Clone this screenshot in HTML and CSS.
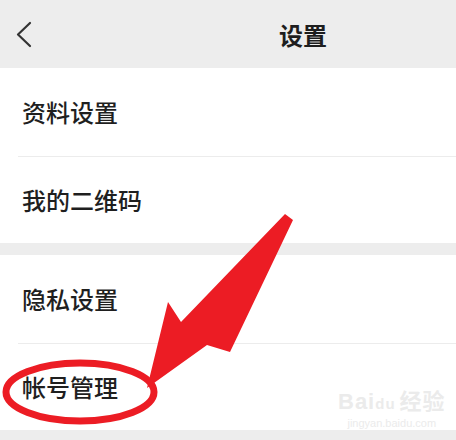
FILE: index.html
```html
<!DOCTYPE html>
<html>
<head>
    <meta charset="utf-8">
    <title>设置</title>
    <link rel="stylesheet" href="styles.css">
</head>
<body>
    <div class="screen">
        <div class="header">
            <span class="back">
                <svg width="20" height="30" viewBox="0 0 20 30">
                    <polyline points="14,4 2,15.5 14,27" fill="none" stroke="#333" stroke-width="2.2" stroke-linecap="round" stroke-linejoin="round"/>
                </svg>
            </span>
            <span class="title">设置</span>
        </div>

        <div class="group">
            <div class="item">资料设置</div>
            <div class="item">我的二维码</div>
        </div>

        <div class="group">
            <div class="item">隐私设置</div>
            <div class="item">帐号管理</div>
        </div>

        <div class="watermark">
            <div class="wm-logo">Bai<span class="paw">du</span>经验</div>
            <div class="wm-url">jingyan.baidu.com</div>
        </div>

        <svg class="marker" width="456" height="440" viewBox="0 0 456 440">
            <polygon points="285,214 293,220 230,352 207,345 147,388 168,302 181,322" fill="#ec1c24"/>
            <ellipse cx="80" cy="392" rx="74" ry="29" fill="none" stroke="#ec1c24" stroke-width="7"/>
        </svg>
    </div>
</body>
</html>
```

FILE: styles.css
```css
body {
    margin: 0;
    font-family: "Noto Sans CJK SC", "Noto Sans", sans-serif;
    background-color: #ededed;
}

.screen {
    position: relative;
    width: 456px;
    height: 440px;
    overflow: hidden;
    background-color: #ededed;
}

.header {
    display: flex;
    align-items: center;
    height: 68px;
    padding-left: 16px;
}

.back {
    display: flex;
    width: 20px;
}

.title {
    margin-left: 243px;
    font-size: 24px;
    font-weight: bold;
    color: #1e1e1e;
}

.group {
    background-color: #fff;
    margin-bottom: 12px;
}

.item {
    height: 88px;
    line-height: 88px;
    padding-left: 22px;
    font-size: 24px;
    font-weight: 500;
    color: #1f1f1f;
}

.item + .item {
    border-top: 1px solid #ececec;
    margin-left: 18px;
    padding-left: 4px;
    height: 86px;
    line-height: 86px;
}

.watermark {
    position: absolute;
    left: 338px;
    top: 390px;
    color: #ebebeb;
    text-align: center;
}

.wm-logo {
    font-family: "Liberation Sans", "Noto Sans CJK SC", sans-serif;
    font-size: 22px;
    font-weight: bold;
    line-height: 24px;
    letter-spacing: 1px;
}

.paw {
    font-size: 15px;
    margin-right: 4px;
}

.wm-url {
    font-family: "Liberation Sans", sans-serif;
    font-size: 11px;
    line-height: 14px;
}

.marker {
    position: absolute;
    left: 0;
    top: 0;
}
```
